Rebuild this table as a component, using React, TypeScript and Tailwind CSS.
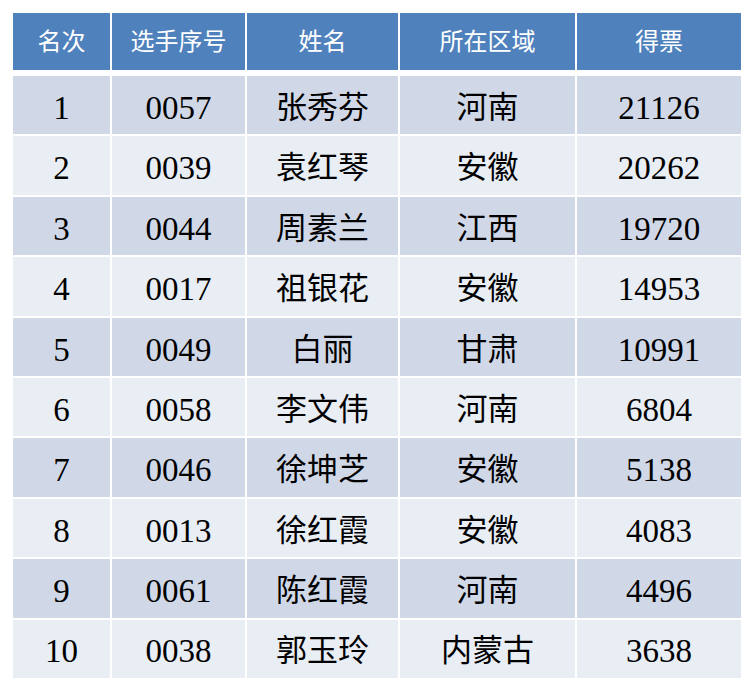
const headers = ["名次", "选手序号", "姓名", "所在区域", "得票"];

const rows = [
  ["1", "0057", "张秀芬", "河南", "21126"],
  ["2", "0039", "袁红琴", "安徽", "20262"],
  ["3", "0044", "周素兰", "江西", "19720"],
  ["4", "0017", "祖银花", "安徽", "14953"],
  ["5", "0049", "白丽", "甘肃", "10991"],
  ["6", "0058", "李文伟", "河南", "6804"],
  ["7", "0046", "徐坤芝", "安徽", "5138"],
  ["8", "0013", "徐红霞", "安徽", "4083"],
  ["9", "0061", "陈红霞", "河南", "4496"],
  ["10", "0038", "郭玉玲", "内蒙古", "3638"],
];

const cols = "grid grid-cols-[97px_133px_151px_175px_164px] gap-x-[2px]";

export default function App() {
  return (
    <div className="min-h-[692px] w-[754px] bg-white pl-[13px] pt-[13px] font-['Liberation_Serif','Noto_Sans_CJK_SC',serif]">
      <div className="flex w-[728px] flex-col">
        <div className={`${cols} mb-[6px]`}>
          {headers.map((h) => (
            <div
              key={h}
              className="flex h-[57px] items-center justify-center bg-[#4f81bd] text-[24px] text-white"
            >
              {h}
            </div>
          ))}
        </div>
        <div className="flex flex-col gap-y-[2px]">
          {rows.map((r, i) => (
            <div key={r[0]} className={cols}>
              {r.map((c, j) => (
                <div
                  key={j}
                  className={`flex h-[58.4px] items-center justify-center text-black ${
                    j === 2 || j === 3 ? "pt-[6px] text-[31px]" : "pt-[7px] text-[33px]"
                  } ${i % 2 === 0 ? "bg-[#d0d8e8]" : "bg-[#e9edf4]"}`}
                >
                  {c}
                </div>
              ))}
            </div>
          ))}
        </div>
      </div>
    </div>
  );
}
